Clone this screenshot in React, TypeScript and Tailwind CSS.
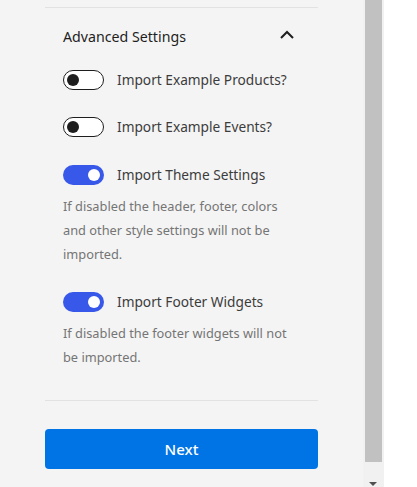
import { useState } from "react";

function Toggle({ on, onClick }: { on: boolean; onClick: () => void }) {
  return (
    <button
      type="button"
      onClick={onClick}
      className={
        on
          ? "relative h-[20px] w-[41px] shrink-0 rounded-full bg-[#3858e9]"
          : "relative h-[20px] w-[41px] shrink-0 rounded-full border-[1.5px] border-[#1e1e1e] bg-white"
      }
    >
      <span
        className={
          on
            ? "absolute right-[4px] top-[4px] h-[12px] w-[12px] rounded-full bg-white"
            : "absolute left-[2.5px] top-[2.5px] h-[12px] w-[12px] rounded-full bg-[#1e1e1e]"
        }
      />
    </button>
  );
}

function ToggleRow({
  label,
  on,
  onClick,
}: {
  label: string;
  on: boolean;
  onClick: () => void;
}) {
  return (
    <div className="flex h-[20px] items-center gap-[13px]">
      <Toggle on={on} onClick={onClick} />
      <span className="text-[13.7px] leading-[20px] text-[#3c3c3c]">{label}</span>
    </div>
  );
}

export default function App() {
  const [opts, setOpts] = useState({
    products: false,
    events: false,
    theme: true,
    widgets: true,
  });
  const flip = (k: keyof typeof opts) => setOpts((o) => ({ ...o, [k]: !o[k] }));

  return (
    <div
      className="flex h-[487px] w-[417px] overflow-hidden bg-white"
      style={{ fontFamily: '"Noto Sans", "Open Sans", sans-serif' }}
    >
      <div className="w-[363px] shrink-0 bg-[#f4f4f4] pt-[7px]">
        <div className="ml-[45px] w-[273px]">
          <div className="h-px bg-[#e2e2e2]" />
          <div className="px-[18px]">
            <div className="mt-[17px] flex h-[24px] items-center justify-between">
              <span className="text-[14.2px] leading-[24px] text-[#1e1e1e]">
                Advanced Settings
              </span>
              <svg
                width="24"
                height="24"
                viewBox="0 0 24 24"
                fill="none"
                stroke="#1e1e1e"
                strokeWidth="2"
                className="mr-[1px] mb-[4px]"
              >
                <path d="M6 15l6-6 6 6" />
              </svg>
            </div>

            <div className="mt-[21px]">
              <ToggleRow
                label="Import Example Products?"
                on={opts.products}
                onClick={() => flip("products")}
              />
            </div>
            <div className="mt-[27px]">
              <ToggleRow
                label="Import Example Events?"
                on={opts.events}
                onClick={() => flip("events")}
              />
            </div>
            <div className="mt-[28px]">
              <ToggleRow
                label="Import Theme Settings"
                on={opts.theme}
                onClick={() => flip("theme")}
              />
              <p className="mt-[9px] text-[12.8px] leading-[24px] text-[#757575]">
                If disabled the header, footer, colors
                <br />
                and other style settings will not be
                <br />
                imported.
              </p>
            </div>
            <div className="mt-[26px]">
              <ToggleRow
                label="Import Footer Widgets"
                on={opts.widgets}
                onClick={() => flip("widgets")}
              />
              <p className="mt-[9px] text-[12.8px] leading-[24px] text-[#757575]">
                If disabled the footer widgets will not
                <br />
                be imported.
              </p>
            </div>
          </div>
          <div className="mt-[31px] h-px bg-[#e2e2e2]" />
          <button
            type="button"
            className="mt-[28px] flex h-[40px] w-full items-center justify-center rounded-[4px] bg-[#0073e5] text-[15px] font-medium text-white"
          >
            Next
          </button>
        </div>
      </div>
      <div className="relative w-[21px] shrink-0 bg-[#f1f1f1]">
        <div className="ml-[2px] h-[462px] w-[17px] bg-[#c1c1c1]" />
        <div className="absolute bottom-[1px] left-[6px] h-0 w-0 border-x-[4px] border-t-[4px] border-x-transparent border-t-[#505050]" />
      </div>
      <div className="flex-1 bg-white" />
    </div>
  );
}
